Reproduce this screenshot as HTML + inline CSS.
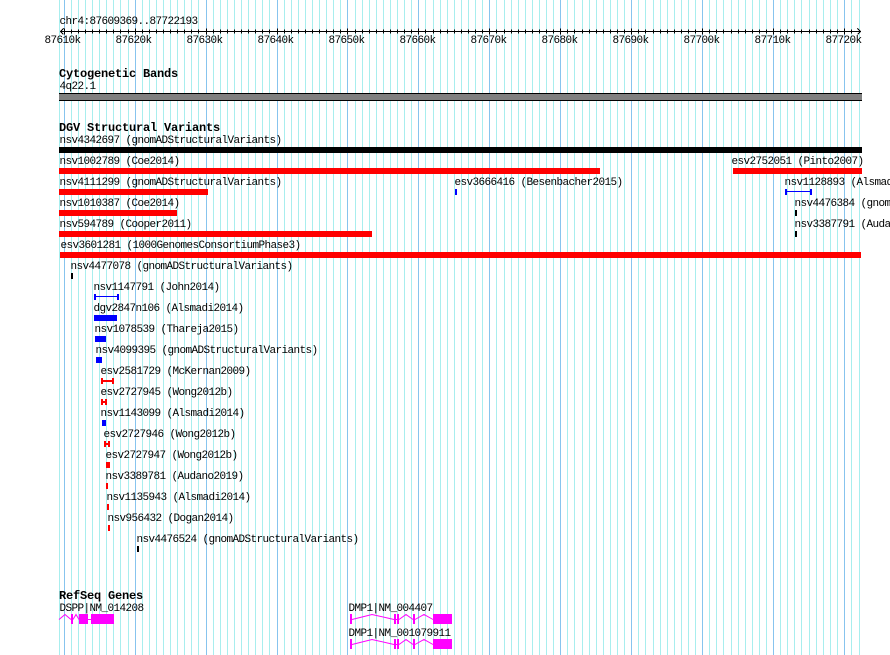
<!DOCTYPE html>
<html><head><meta charset="utf-8"><title>GBrowse</title>
<style>
html,body{margin:0;padding:0;background:#fff;width:890px;height:655px;overflow:hidden}
svg{display:block;position:absolute;left:0;top:0}
text{font-family:"Liberation Mono",monospace;font-size:11px;letter-spacing:-0.6px;fill:#000;white-space:pre}
text.b{font-size:12px;font-weight:bold;letter-spacing:-0.2px}
.c{shape-rendering:crispEdges}
</style></head><body>
<svg width="890" height="655" viewBox="0 0 890 655">
<g class="c" fill="none" stroke-width="1" transform="translate(.5 0)">
<path stroke="#a8eeee" d="M59 0V655M71 0V655M78 0V655M85 0V655M92 0V655M99 0V655M106 0V655M113 0V655M120 0V655M128 0V655M142 0V655M149 0V655M156 0V655M163 0V655M170 0V655M177 0V655M184 0V655M191 0V655M198 0V655M213 0V655M220 0V655M227 0V655M234 0V655M241 0V655M248 0V655M255 0V655M262 0V655M269 0V655M284 0V655M291 0V655M298 0V655M305 0V655M312 0V655M319 0V655M326 0V655M333 0V655M340 0V655M355 0V655M362 0V655M369 0V655M376 0V655M383 0V655M390 0V655M397 0V655M404 0V655M411 0V655M425 0V655M433 0V655M440 0V655M447 0V655M454 0V655M461 0V655M468 0V655M475 0V655M482 0V655M496 0V655M504 0V655M511 0V655M518 0V655M525 0V655M532 0V655M539 0V655M546 0V655M553 0V655M567 0V655M574 0V655M582 0V655M589 0V655M596 0V655M603 0V655M610 0V655M617 0V655M624 0V655M638 0V655M645 0V655M653 0V655M660 0V655M667 0V655M674 0V655M681 0V655M688 0V655M695 0V655M709 0V655M716 0V655M723 0V655M731 0V655M738 0V655M745 0V655M752 0V655M759 0V655M766 0V655M780 0V655M787 0V655M794 0V655M801 0V655M809 0V655M816 0V655M823 0V655M830 0V655M837 0V655M851 0V655M859 0V655"/>
<path stroke="#87c4ee" d="M64 0V655M135 0V655M206 0V655M277 0V655M347 0V655M418 0V655M489 0V655M560 0V655M631 0V655M702 0V655M773 0V655M844 0V655"/>
</g>

<g class="c" fill="none" stroke="#000" transform="translate(.5 .5)">
<path d="M60 31H860"/>
<path d="M71 29V33M78 29V33M85 29V33M92 29V33M99 29V33M106 29V33M113 29V33M120 29V33M128 29V33M142 29V33M149 29V33M156 29V33M163 29V33M170 29V33M177 29V33M184 29V33M191 29V33M198 29V33M213 29V33M220 29V33M227 29V33M234 29V33M241 29V33M248 29V33M255 29V33M262 29V33M269 29V33M284 29V33M291 29V33M298 29V33M305 29V33M312 29V33M319 29V33M326 29V33M333 29V33M340 29V33M355 29V33M362 29V33M369 29V33M376 29V33M383 29V33M390 29V33M397 29V33M404 29V33M411 29V33M425 29V33M433 29V33M440 29V33M447 29V33M454 29V33M461 29V33M468 29V33M475 29V33M482 29V33M496 29V33M504 29V33M511 29V33M518 29V33M525 29V33M532 29V33M539 29V33M546 29V33M553 29V33M567 29V33M574 29V33M582 29V33M589 29V33M596 29V33M603 29V33M610 29V33M617 29V33M624 29V33M638 29V33M645 29V33M653 29V33M660 29V33M667 29V33M674 29V33M681 29V33M688 29V33M695 29V33M709 29V33M716 29V33M723 29V33M731 29V33M738 29V33M745 29V33M752 29V33M759 29V33M766 29V33M780 29V33M787 29V33M794 29V33M801 29V33M809 29V33M816 29V33M823 29V33M830 29V33M837 29V33M851 29V33"/>
<path d="M64 28V34M135 28V34M206 28V34M277 28V34M347 28V34M418 28V34M489 28V34M560 28V34M631 28V34M702 28V34M773 28V34M844 28V34"/>
<path d="M63 28L60 31L63 34M857 28L860 31L857 34"/>
</g>

<g class="c">
<rect x="59" y="93" width="803" height="8" fill="#000"/>
<rect x="59" y="94" width="803" height="6" fill="#808080"/>
<rect x="59" y="147" width="803" height="6" fill="#000"/>
<g fill="#f00">
<rect x="59" y="168" width="541" height="6"/>
<rect x="733" y="168" width="129" height="6"/>
<rect x="59" y="189" width="149" height="6"/>
<rect x="59" y="210" width="118" height="6"/>
<rect x="59" y="231" width="313" height="6"/>
<rect x="60" y="252" width="801" height="6"/>
<rect x="101" y="378" width="2" height="6"/><rect x="112" y="378" width="2" height="6"/><rect x="101" y="380" width="13" height="2"/>
<rect x="101" y="399" width="2" height="6"/><rect x="105" y="399" width="2" height="6"/><rect x="101" y="401" width="6" height="2"/>
<rect x="104" y="441" width="2" height="6"/><rect x="108" y="441" width="2" height="6"/><rect x="104" y="443" width="6" height="2"/>
<rect x="106" y="462" width="4" height="6"/>
<rect x="106" y="483" width="2" height="6"/>
<rect x="107" y="504" width="2" height="6"/>
<rect x="108" y="525" width="2" height="6"/>
</g>
<g fill="#00f">
<rect x="455" y="189" width="2" height="6"/>
<rect x="785" y="189" width="2" height="6"/><rect x="810" y="189" width="2" height="6"/><rect x="785" y="191" width="27" height="1"/>
<rect x="94" y="294" width="2" height="6"/><rect x="117" y="294" width="2" height="6"/><rect x="94" y="296" width="25" height="1"/>
<rect x="94" y="315" width="23" height="6"/>
<rect x="95" y="336" width="11" height="6"/>
<rect x="96" y="357" width="6" height="6"/>
<rect x="102" y="420" width="4" height="6"/>
</g>
<g fill="#000">
<rect x="795" y="210" width="2" height="6"/>
<rect x="795" y="231" width="2" height="6"/>
<rect x="71" y="273" width="2" height="6"/>
<rect x="137" y="546" width="2" height="6"/>
</g>
<g fill="#f0f">
<rect x="71" y="614" width="2" height="10"/><rect x="79" y="614" width="9" height="10"/><rect x="91" y="614" width="23" height="10"/>
<rect x="88" y="619" width="3" height="1"/>
<rect x="350" y="614" width="2" height="10"/><rect x="394" y="614" width="2" height="10"/><rect x="397" y="614" width="2" height="10"/><rect x="413" y="614" width="2" height="10"/><rect x="433" y="614" width="19" height="10"/>
<rect x="350" y="639" width="2" height="10"/><rect x="394" y="639" width="2" height="10"/><rect x="397" y="639" width="2" height="10"/><rect x="413" y="639" width="2" height="10"/><rect x="433" y="639" width="19" height="10"/>
</g>
</g>
<g fill="none" stroke="#f0f" stroke-width="1">
<path d="M59 619.5L65 614.5L71 619.5M73 619.5L76 614.5L79 619.5"/>
<path d="M352 619.5L372 614.5L394 619.5M396 619.5H397M399 619.5L406 614.5L413 619.5M415 619.5L424 614.5L433 619.5"/>
<path d="M352 644.5L372 639.5L394 644.5M396 644.5H397M399 644.5L406 639.5L413 644.5M415 644.5L424 639.5L433 644.5"/>
</g>

<g transform="translate(-0.5 -1)">
<text x="60" y="25">chr4:87609369..87722193</text>
<text x="45" y="44">87610k</text><text x="116" y="44">87620k</text><text x="187" y="44">87630k</text><text x="258" y="44">87640k</text><text x="329" y="44">87650k</text><text x="400" y="44">87660k</text><text x="471" y="44">87670k</text><text x="542" y="44">87680k</text><text x="613" y="44">87690k</text><text x="684" y="44">87700k</text><text x="755" y="44">87710k</text><text x="826" y="44">87720k</text>

<text class="b" x="59.5" y="78">Cytogenetic Bands</text>
<text x="60" y="90">4q22.1</text>
<text class="b" x="59.5" y="132">DGV Structural Variants</text>
<text x="60" y="144">nsv4342697 (gnomADStructuralVariants)</text>
<text x="60" y="165">nsv1002789 (Coe2014)</text>
<text x="732" y="165">esv2752051 (Pinto2007)</text>
<text x="60" y="186">nsv4111299 (gnomADStructuralVariants)</text>
<text x="455" y="186">esv3666416 (Besenbacher2015)</text>
<text x="785" y="186">nsv1128893 (Alsmadi2014)</text>
<text x="60" y="207">nsv1010387 (Coe2014)</text>
<text x="795" y="207">nsv4476384 (gnomADStructuralVariants)</text>
<text x="60" y="228">nsv594789 (Cooper2011)</text>
<text x="795" y="228">nsv3387791 (Audano2019)</text>
<text x="61" y="249">esv3601281 (1000GenomesConsortiumPhase3)</text>
<text x="71" y="270">nsv4477078 (gnomADStructuralVariants)</text>
<text x="94" y="291">nsv1147791 (John2014)</text>
<text x="94" y="312">dgv2847n106 (Alsmadi2014)</text>
<text x="95" y="333">nsv1078539 (Thareja2015)</text>
<text x="96" y="354">nsv4099395 (gnomADStructuralVariants)</text>
<text x="101" y="375">esv2581729 (McKernan2009)</text>
<text x="101" y="396">esv2727945 (Wong2012b)</text>
<text x="101" y="417">nsv1143099 (Alsmadi2014)</text>
<text x="104" y="438">esv2727946 (Wong2012b)</text>
<text x="106" y="459">esv2727947 (Wong2012b)</text>
<text x="106" y="480">nsv3389781 (Audano2019)</text>
<text x="107" y="501">nsv1135943 (Alsmadi2014)</text>
<text x="108" y="522">nsv956432 (Dogan2014)</text>
<text x="137" y="543">nsv4476524 (gnomADStructuralVariants)</text>
<text class="b" x="59.5" y="600">RefSeq Genes</text>
<text x="60" y="612">DSPP|NM_014208</text>
<text x="349" y="612">DMP1|NM_004407</text>
<text x="349" y="637">DMP1|NM_001079911</text>
</g>
</svg>
</body></html>
